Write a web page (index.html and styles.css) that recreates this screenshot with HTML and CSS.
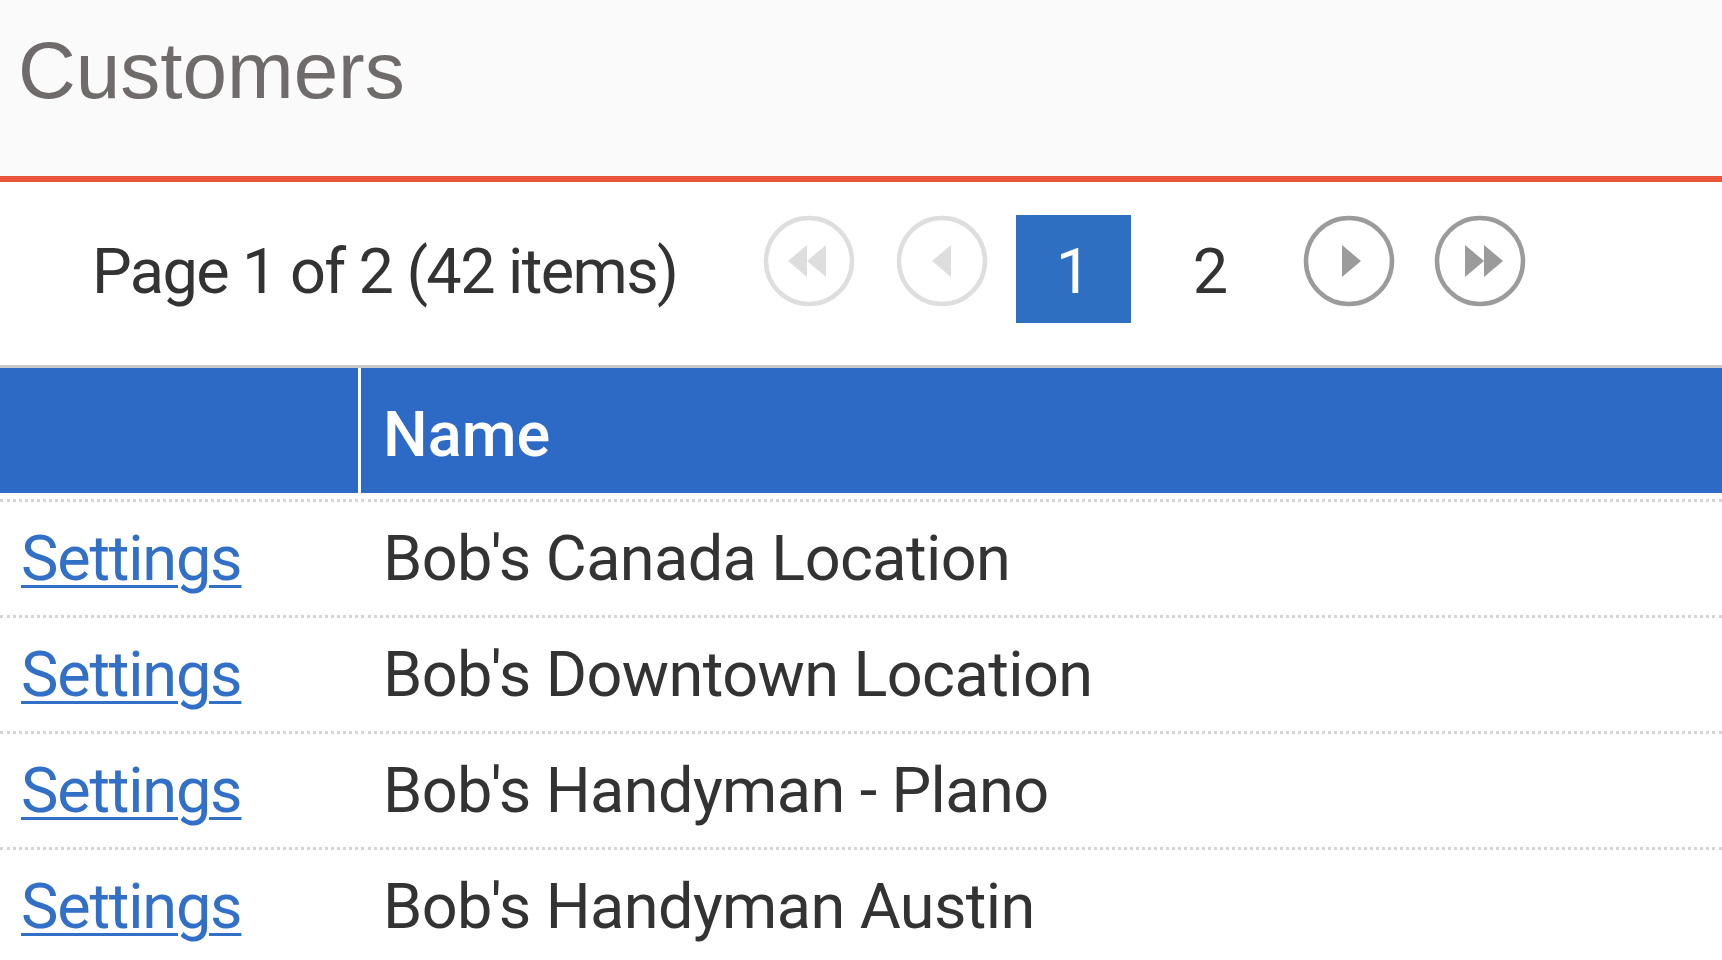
FILE: index.html
```html
<!DOCTYPE html>
<html lang="en">
<head>
<meta charset="utf-8">
<title>Customers</title>
<link rel="stylesheet" href="styles.css">
</head>
<body>
<header class="page-head">
  <h1 class="page-title">Customers</h1>
</header>

<nav class="pager">
  <span class="pager-info">Page 1 of 2 (42 items)</span>
  <span class="pager-btn first disabled" aria-label="First">
    <svg viewBox="0 0 92 92" width="92" height="92"><circle cx="46" cy="46" r="43" fill="none" stroke-width="4.5"/><polygon points="44,30 25,46 44,62"/><polygon points="63,30 44,46 63,62"/></svg>
  </span>
  <span class="pager-btn prev disabled" aria-label="Previous">
    <svg viewBox="0 0 92 92" width="92" height="92"><circle cx="46" cy="46" r="43" fill="none" stroke-width="4.5"/><polygon points="55,30 36,46 55,62"/></svg>
  </span>
  <span class="page-num current">1</span>
  <span class="page-num">2</span>
  <span class="pager-btn next" aria-label="Next">
    <svg viewBox="0 0 92 92" width="92" height="92"><circle cx="46" cy="46" r="43" fill="none" stroke-width="4.5"/><polygon points="39,30 58,46 39,62"/></svg>
  </span>
  <span class="pager-btn last" aria-label="Last">
    <svg viewBox="0 0 92 92" width="92" height="92"><circle cx="46" cy="46" r="43" fill="none" stroke-width="4.5"/><polygon points="31,30 50,46 31,62"/><polygon points="50,30 69,46 50,62"/></svg>
  </span>
</nav>

<section class="grid">
  <div class="grid-head">
    <div class="hcell"></div>
    <div class="hcell name">Name</div>
  </div>
  <div class="grid-body">
    <div class="row">
      <div class="cell cmd"><a href="#">Settings</a></div>
      <div class="cell name">Bob's Canada Location</div>
    </div>
    <div class="row">
      <div class="cell cmd"><a href="#">Settings</a></div>
      <div class="cell name">Bob's Downtown Location</div>
    </div>
    <div class="row">
      <div class="cell cmd"><a href="#">Settings</a></div>
      <div class="cell name">Bob's Handyman - Plano</div>
    </div>
    <div class="row">
      <div class="cell cmd"><a href="#">Settings</a></div>
      <div class="cell name">Bob's Handyman Austin</div>
    </div>
  </div>
</section>
</body>
</html>
```

FILE: styles.css
```css
* { box-sizing: border-box; }

html, body {
  margin: 0;
  padding: 0;
  background: #ffffff;
}

body {
  font-family: Roboto, "Liberation Sans", Arial, sans-serif;
  font-size: 63px;
  color: #333333;
  overflow: hidden;
}

.page-head {
  height: 182px;
  padding: 32px 0 0 18px;
  background: #fafafa;
  border-bottom: 6px solid #e8553a;
}

.page-title {
  margin: 0;
  font-family: "Liberation Sans", Arial, sans-serif;
  font-weight: 400;
  font-size: 80px;
  line-height: 78px;
  color: #6f6b6a;
}

.pager {
  display: flex;
  align-items: flex-start;
  height: 186px;
  padding-top: 33px;
  border-bottom: 3px solid #c9c9c9;
}

.pager-info {
  flex: none;
  width: 671px;
  margin-left: 92px;
  height: 108px;
  line-height: 114px;
  letter-spacing: -1.6px;
  color: #333333;
  white-space: nowrap;
}

.pager-btn {
  flex: none;
  display: block;
  width: 92px;
  height: 92px;
}

.pager-btn svg { display: block; }

.pager-btn circle { stroke: #9b9b9b; }
.pager-btn polygon { fill: #9b9b9b; }
.pager-btn.disabled circle { stroke: #dedede; }
.pager-btn.disabled polygon { fill: #dedede; }

.pager-btn.prev { margin-left: 41px; }
.pager-btn.next { margin-left: 35px; }
.pager-btn.last { margin-left: 39px; }

.page-num {
  flex: none;
  width: 115px;
  height: 108px;
  line-height: 114px;
  text-align: center;
  color: #333333;
}

.page-num.current {
  margin-left: 28px;
  background: #2f6fc2;
  color: #ffffff;
}

.page-num.current + .page-num { margin-left: 22px; }

.grid-head,
.row {
  display: grid;
  grid-template-columns: 358px 1fr;
  column-gap: 3px;
}

.grid-head { background: #ffffff; }

.hcell {
  height: 125px;
  padding-top: 8px;
  line-height: 117px;
  background: #2c6ac6;
  color: #ffffff;
  font-weight: 500;
}

.hcell.name { padding-left: 22px; }

.grid-body { margin-top: 6px; }

.cell {
  height: 116px;
  line-height: 113px;
  border-top: 3px dotted #d4d4d4;
  white-space: nowrap;
}

.cell.cmd { padding-left: 21px; }
.cell.name {
  padding-left: 22px;
  letter-spacing: -0.6px;
}

.cell a {
  color: #3170c6;
  letter-spacing: -1.2px;
  text-decoration: underline;
  text-decoration-thickness: 3px;
  text-underline-offset: 5px;
}
```
